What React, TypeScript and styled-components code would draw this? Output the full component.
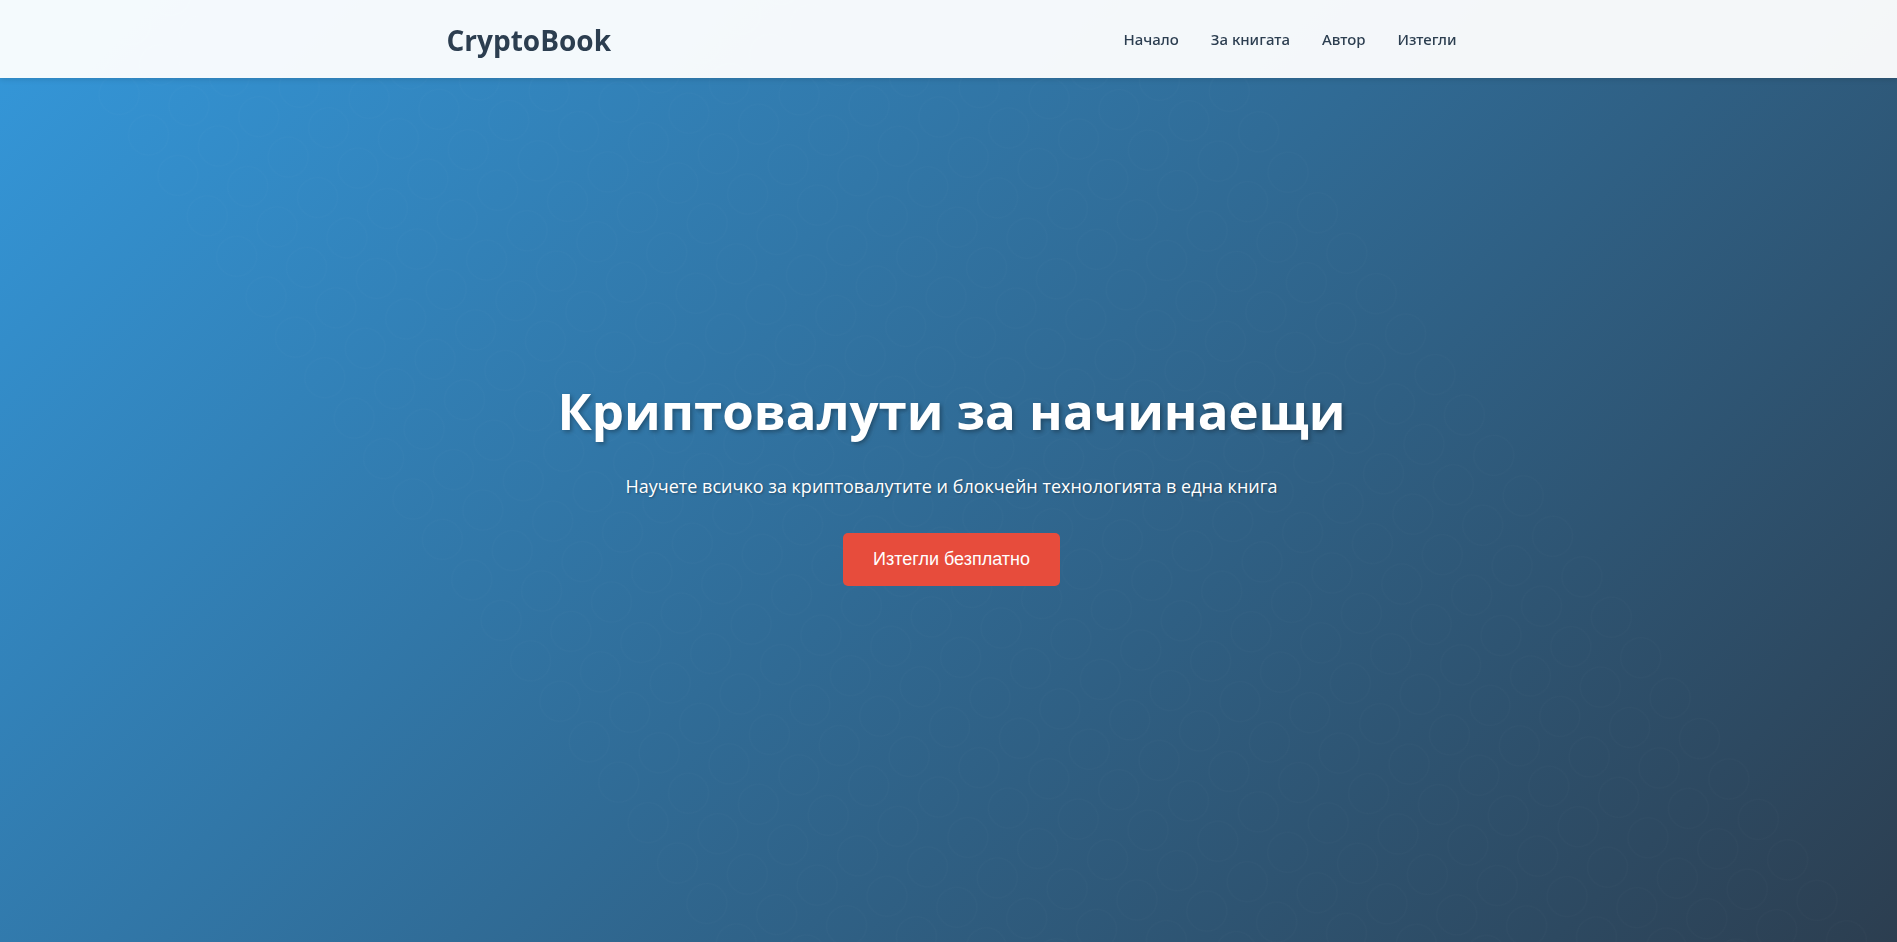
import React from 'react';
import styled, { createGlobalStyle } from 'styled-components';

const GlobalStyle = createGlobalStyle`
  * { margin: 0; padding: 0; box-sizing: border-box; }
  body { font-family: 'Open Sans', 'Noto Sans', sans-serif; line-height: 1.6; color: #333; }
`;

const Header = styled.header`
  position: fixed;
  top: 0;
  left: 0;
  right: 0;
  z-index: 10;
  background: rgba(255, 255, 255, 0.95);
  box-shadow: 0 2px 5px rgba(0, 0, 0, 0.1);
`;

const Nav = styled.nav`
  display: flex;
  justify-content: space-between;
  align-items: center;
  max-width: 1056px;
  margin: 0 auto;
  padding: 17px 20px 15px 26px;
`;

const Logo = styled.a`
  font-size: 28px;
  line-height: 46px;
  font-weight: 700;
  color: #2c3e50;
  text-decoration: none;
`;

const Links = styled.ul`
  display: flex;
  gap: 32px;
  list-style: none;
`;

const NavLink = styled.a`
  font-family: 'Noto Sans', 'Open Sans', sans-serif;
  font-size: 15px;
  font-weight: 500;
  color: #2c3e50;
  text-decoration: none;
`;

const Hero = styled.section`
  position: relative;
  overflow: hidden;
  min-height: 100vh;
  display: flex;
  align-items: center;
  justify-content: center;
  padding: 40px 32px 32px 38px;
  text-align: center;
  color: #fff;
  background: linear-gradient(135deg, #3498db, #2c3e50);

  /* faint tilted lattice of rings behind the text */
  &::before {
    content: '';
    position: absolute;
    inset: 0 -6px -9px 0;
    background: radial-gradient(
      circle,
      rgba(255, 255, 255, 0) 19px,
      rgba(255, 255, 255, 0.02) 20px,
      rgba(255, 255, 255, 0) 21px
    ) -21px 0 / 50px 50px;
    transform: rotate(54deg);
  }
`;

const HeroContent = styled.div`
  position: relative;
`;

const Title = styled.h1`
  font-size: 51px;
  line-height: 90px;
  font-weight: 700;
  margin-bottom: 16px;
  text-shadow: 2px 2px 4px rgba(0, 0, 0, 0.3);
`;

const Lead = styled.p`
  font-size: 18px;
  line-height: 30px;
  margin-bottom: 32px;
  text-shadow: 1px 1px 2px rgba(0, 0, 0, 0.3);
`;

const Cta = styled.button`
  padding: 16px 30px;
  border: 0;
  border-radius: 5px;
  background: #e74c3c;
  color: #fff;
  font-family: 'Liberation Sans', Arial, sans-serif;
  font-size: 18px;
  line-height: 21px;
`;

const links = [
  ['Начало', '#home'],
  ['За книгата', '#about'],
  ['Автор', '#author'],
  ['Изтегли', '#download'],
];

export default function App() {
  return (
    <>
      <GlobalStyle />
      <Header>
        <Nav>
          <Logo href="#home">CryptoBook</Logo>
          <Links>
            {links.map(([label, href]) => (
              <li key={href}><NavLink href={href}>{label}</NavLink></li>
            ))}
          </Links>
        </Nav>
      </Header>
      <Hero id="home">
        <HeroContent>
          <Title>Криптовалути за начинаещи</Title>
          <Lead>Научете всичко за криптовалутите и блокчейн технологията в една книга</Lead>
          <Cta type="button">Изтегли безплатно</Cta>
        </HeroContent>
      </Hero>
    </>
  );
}
